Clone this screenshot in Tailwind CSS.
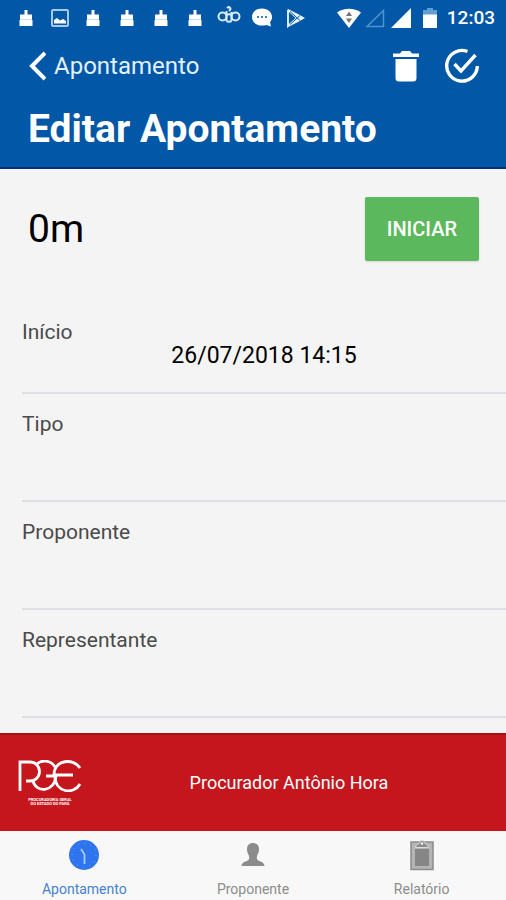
<!DOCTYPE html>
<html lang="pt-BR">
<head>
  <meta charset="UTF-8">
  <meta name="viewport" content="width=device-width, initial-scale=1.0">
  <title>Editar Apontamento</title>
  <script src="https://cdn.jsdelivr.net/npm/@tailwindcss/browser@4"></script>
</head>
<body class="bg-[#f4f4f4] min-h-screen flex flex-col font-[Roboto,sans-serif] text-black">

  <!-- Shared status icon -->
  <svg class="hidden">
    <symbol id="broom" viewBox="0 0 14 18">
      <path fill="#fff" d="M5.500 1h3v4.500H13V11h.5v6H.5v-6H1V5.500h4.500z"/>
      <path stroke="#c9dff2" d="M1 10.500h12"/>
    </symbol>
  </svg>

  <header class="bg-[#0257a6] text-white border-b-2 border-[#022f80]">
    <!-- Status bar -->
    <div class="h-9 pl-[9px] pr-[11px] flex items-center justify-between">
      <div class="grid grid-cols-9 w-[304px] items-center justify-items-center">
        <svg class="w-3.5 h-[18px]"><use href="#broom"/></svg>
        <svg class="w-5 h-[18px]" viewBox="0 0 20 18">
          <rect x="2" y="1" width="16" height="16" rx="1" fill="none" stroke="#a5caea" stroke-width="2"/>
          <path fill="#fff" d="M4 14.500V11l3-2 3 2.500 3-1.500 3 2v2.500z"/>
        </svg>
        <svg class="w-3.5 h-[18px]"><use href="#broom"/></svg>
        <svg class="w-3.5 h-[18px]"><use href="#broom"/></svg>
        <svg class="w-3.5 h-[18px]"><use href="#broom"/></svg>
        <svg class="w-3.5 h-[18px]"><use href="#broom"/></svg>
        <svg class="w-6 h-6" viewBox="0 0 24 24" fill="none" stroke="#d9ebfa" stroke-width="2">
          <circle cx="5.500" cy="10.500" r="4"/>
          <circle cx="18.500" cy="10.500" r="4"/>
          <path d="M9.500 5v10M14.500 6v9M9.500 15c1 1 4 1 5 0M9.500 9c1-1 4-1 5 0M10 2c2.500-2 5 .5 2 3"/>
        </svg>
        <svg class="w-[22px] h-5" viewBox="0 0 22 20">
          <path fill="#fff" d="M11 .5c6 0 10 3.800 10 8.500 0 2.500-1 4-2 5l1 4.500-4.500-1.500c-1.500.5-3 .5-4.500.5C5 17.500 1 14 1 9S5 .5 11 .5z"/>
          <g fill="#0257a6"><circle cx="7" cy="9" r="1"/><circle cx="11" cy="9" r="1"/><circle cx="15" cy="9" r="1"/></g>
        </svg>
        <svg class="w-5 h-5" viewBox="0 0 20 20">
          <path fill="none" stroke="#d9ebfa" stroke-width="2" d="M2 2v16L14 7.500M2 2l12 10.500"/>
          <path fill="#e6f2fc" d="M1 .5 13 6.500l6 3.500-6 3.500L1 19.500l9-9.500z"/>
          <path fill="none" stroke="#0257a6" d="m4 3.500 10 9M4 16.500l10-9"/>
        </svg>
      </div>
      <div class="flex items-center">
        <svg class="w-6 h-5 mr-1" viewBox="0 0 24 20">
          <path fill="#fff" d="M0 4.500C7-.5 17-.5 24 4.500L12 20z"/>
          <path fill="#7d7078" d="m12 3.500 3 4.500H9zM9 10.500h6L12 15z"/>
        </svg>
        <svg class="w-5 h-5 mr-1.5" viewBox="0 0 20 20">
          <path fill="none" stroke="#4f94cf" stroke-width="1.500" d="M18.500 2.500v16H2z"/>
        </svg>
        <svg class="w-5 h-5 mr-3" viewBox="0 0 20 20"><path fill="#fff" d="M20 0v20H0z"/></svg>
        <svg class="w-3.5 h-5 mr-2.5" viewBox="0 0 14 20">
          <path fill="#5e9fd6" d="M4 0h6v2h4v5H0V2h4z"/>
          <path fill="#fff" d="M0 6.500h14V20H0z"/>
        </svg>
        <span class="text-[19px] leading-6 font-medium">12:03</span>
      </div>
    </div>

    <!-- Navigation bar -->
    <div class="h-[60px] pl-7 pr-[26px] flex items-center justify-between">
      <a href="#" class="flex items-center gap-2 text-[24px] leading-7 text-[#e3f1fc]">
        <svg class="w-[18px] h-[30px]" viewBox="0 0 18 30" fill="none" stroke="#fff" stroke-width="4">
          <path d="M17 2 4 15l13 13"/>
        </svg>
        Apontamento
      </a>
      <div class="flex items-center gap-6">
        <button type="button" aria-label="Excluir">
          <svg class="block w-7 h-8" viewBox="0 0 28 32" fill="#fff">
            <path d="M1 3.500h7L10 1h8l2 2.500h7V7H1zM3.500 9h21v19a3.500 3.500 0 0 1-3.500 3.500H7A3.500 3.500 0 0 1 3.500 28z"/>
          </svg>
        </button>
        <button type="button" aria-label="Salvar">
          <svg class="block w-9 h-9" viewBox="0 0 36 36" fill="none" stroke="#fff" stroke-width="3.400">
            <path d="M23.500 3.500A15.300 15.300 0 1 0 33.300 18"/>
            <path d="m10.500 16 6.500 7L31.500 7"/>
          </svg>
        </button>
      </div>
    </div>

    <h1 class="px-7 pt-[9px] pb-[14px] text-[39px] leading-12 font-bold">Editar Apontamento</h1>
  </header>

  <main class="flex-1">
    <div class="pl-7 pr-[27px] pt-7 pb-10 flex items-center justify-between">
      <p class="text-[39px] leading-12">0m</p>
      <button type="button" class="h-16 px-[22px] rounded-xs bg-[#5cb85c] text-white text-[20px] leading-6 font-medium shadow-sm">INICIAR</button>
    </div>

    <form class="pl-[22px] pb-[15px]">
      <div class="h-[93px] pt-[19px] border-b-2 border-[#dfe0e5]">
        <label for="inicio" class="block text-[21px] leading-6 text-[#4a4a4a]">Início</label>
        <input id="inicio" type="text" value="26/07/2018 14:15" class="block w-full h-6 text-center text-[23px] leading-6 outline-none">
      </div>
      <div class="h-[108px] pt-[18px] border-b-2 border-[#dfe0e5]">
        <label for="tipo" class="block text-[21px] leading-6 text-[#4a4a4a]">Tipo</label>
        <input id="tipo" type="text" class="block w-full h-6 text-center text-[23px] leading-6 outline-none">
      </div>
      <div class="h-[108px] pt-[18px] border-b-2 border-[#dfe0e5]">
        <label for="proponente" class="block text-[21px] leading-6 text-[#4a4a4a]">Proponente</label>
        <input id="proponente" type="text" class="block w-full h-6 text-center text-[23px] leading-6 outline-none">
      </div>
      <div class="h-[108px] pt-[18px] border-b-2 border-[#dfe0e5]">
        <label for="representante" class="block text-[21px] leading-6 text-[#4a4a4a]">Representante</label>
        <input id="representante" type="text" class="block w-full h-6 text-center text-[23px] leading-6 outline-none">
      </div>
    </form>
  </main>

  <footer>
    <!-- Logged user -->
    <div class="h-[98px] pl-[18px] bg-[#c4161c] border-t-2 border-[#a80d12] flex items-center text-white">
      <div class="w-16 flex flex-col items-center">
        <svg class="w-16 h-8" viewBox="0 0 64 32" fill="none" stroke="#fff" stroke-width="2.800">
          <path d="M2 31V2h10a9.500 9.500 0 0 1 0 19H8"/>
          <path d="M37 7C33 0 23-1 18 5M15 21c3 12 21 12 23-5H28"/>
          <path d="M62 8C56-2 36-1 36 15h19M37 16c0 17 19 19 25 8"/>
        </svg>
        <p class="mt-1.5 text-[4px] leading-[4px] font-bold text-center">PROCURADORIA GERAL<br>DO ESTADO DO PARÁ</p>
      </div>
      <p class="flex-1 pl-2 pr-[18px] text-center text-[18px] leading-6">Procurador Antônio Hora</p>
    </div>

    <!-- Tabs -->
    <nav class="h-[69px] bg-[#f8f8f8] grid grid-cols-3 text-[14px] leading-4 text-[#8c8c8c]">
      <a href="#" class="pt-2 flex flex-col items-center gap-[10px] text-[#4483cf]">
        <svg class="w-8 h-8" viewBox="0 0 32 32">
          <circle cx="16" cy="16" r="15" fill="#2d74ee"/>
          <circle cx="16" cy="16" r="12" fill="none" stroke="#79aaf8" stroke-dasharray="1 5.280"/>
          <path fill="none" stroke="#a9c8fb" stroke-width="1.800" d="m13 10 3.500 5.500V25"/>
        </svg>
        Apontamento
      </a>
      <a href="#" class="pt-2 flex flex-col items-center gap-[10px]">
        <svg class="w-8 h-8" viewBox="0 0 32 32" fill="#8c8c8c">
          <path d="M16 4c4 0 6 2.500 6 6 0 4-1.500 5-2 7-.5 3 0 4 2 5 3 1 5 1.500 5.500 5h-23c.5-3.500 2.500-4 5.500-5 2-1 2.500-2 2-5-.5-2-2-3-2-7 0-3.500 2-6 6-6z"/>
        </svg>
        Proponente
      </a>
      <a href="#" class="pt-2 flex flex-col items-center gap-[10px]">
        <svg class="w-8 h-8" viewBox="0 0 32 32">
          <path fill="#b4b4b4" stroke="#8c8c8c" stroke-width="1.500" d="M5 3h22v27.500H5z"/>
          <path fill="#868686" d="M9 10h14v17H9z"/>
          <path fill="#8c8c8c" stroke="#dcdcdc" d="M9.500 8.500c0-2.500 2-3.500 3.500-4C13.500.5 18.500.5 19 4.500c1.500.5 3.500 1.500 3.500 4z"/>
          <circle cx="16" cy="4.500" r="1.300" fill="#f8f8f8"/>
        </svg>
        Relatório
      </a>
    </nav>
  </footer>

</body>
</html>
